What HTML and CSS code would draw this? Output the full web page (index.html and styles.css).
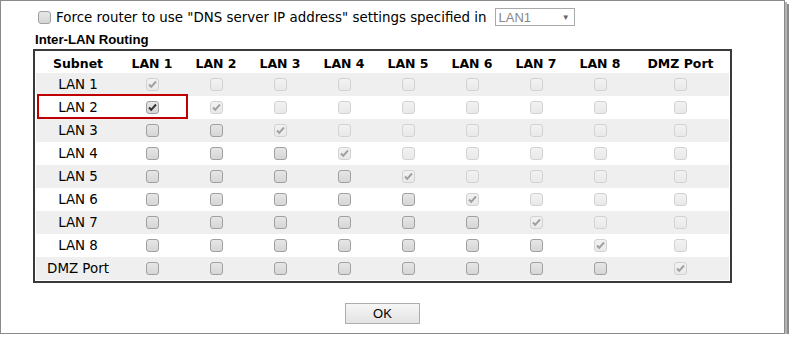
FILE: index.html
```html
<!DOCTYPE html>
<html lang="en">
<head>
  <meta charset="UTF-8">
  <title>Inter-LAN Routing</title>
  <link rel="stylesheet" href="styles.css">
</head>
<body>
  <div class="frame">
    <div class="dns-row">
      <input type="checkbox" class="cb" id="forceDns">
      <label for="forceDns">Force router to use "DNS server IP address" settings specified in</label>
      <div class="select"><span>LAN1</span><span class="arrow">&#9660;</span></div>
    </div>
    <div class="section-title">Inter-LAN Routing</div>
    <div class="table-wrap">
      <table class="routing">
        <tr class="head">
          <th class="subnet">Subnet</th><th>LAN 1</th><th>LAN 2</th><th>LAN 3</th><th>LAN 4</th><th>LAN 5</th><th>LAN 6</th><th>LAN 7</th><th>LAN 8</th><th class="dmz">DMZ Port</th>
        </tr>
        <tr class="odd">
          <td>LAN 1</td>
          <td><input type="checkbox" class="cb" checked disabled></td>
          <td><input type="checkbox" class="cb" disabled></td><td><input type="checkbox" class="cb" disabled></td><td><input type="checkbox" class="cb" disabled></td><td><input type="checkbox" class="cb" disabled></td><td><input type="checkbox" class="cb" disabled></td><td><input type="checkbox" class="cb" disabled></td><td><input type="checkbox" class="cb" disabled></td><td><input type="checkbox" class="cb" disabled></td>
        </tr>
        <tr>
          <td>LAN 2</td>
          <td><input type="checkbox" class="cb" checked></td>
          <td><input type="checkbox" class="cb" checked disabled></td>
          <td><input type="checkbox" class="cb" disabled></td><td><input type="checkbox" class="cb" disabled></td><td><input type="checkbox" class="cb" disabled></td><td><input type="checkbox" class="cb" disabled></td><td><input type="checkbox" class="cb" disabled></td><td><input type="checkbox" class="cb" disabled></td><td><input type="checkbox" class="cb" disabled></td>
        </tr>
        <tr class="odd">
          <td>LAN 3</td>
          <td><input type="checkbox" class="cb"></td><td><input type="checkbox" class="cb"></td>
          <td><input type="checkbox" class="cb" checked disabled></td>
          <td><input type="checkbox" class="cb" disabled></td><td><input type="checkbox" class="cb" disabled></td><td><input type="checkbox" class="cb" disabled></td><td><input type="checkbox" class="cb" disabled></td><td><input type="checkbox" class="cb" disabled></td><td><input type="checkbox" class="cb" disabled></td>
        </tr>
        <tr>
          <td>LAN 4</td>
          <td><input type="checkbox" class="cb"></td><td><input type="checkbox" class="cb"></td><td><input type="checkbox" class="cb"></td>
          <td><input type="checkbox" class="cb" checked disabled></td>
          <td><input type="checkbox" class="cb" disabled></td><td><input type="checkbox" class="cb" disabled></td><td><input type="checkbox" class="cb" disabled></td><td><input type="checkbox" class="cb" disabled></td><td><input type="checkbox" class="cb" disabled></td>
        </tr>
        <tr class="odd">
          <td>LAN 5</td>
          <td><input type="checkbox" class="cb"></td><td><input type="checkbox" class="cb"></td><td><input type="checkbox" class="cb"></td><td><input type="checkbox" class="cb"></td>
          <td><input type="checkbox" class="cb" checked disabled></td>
          <td><input type="checkbox" class="cb" disabled></td><td><input type="checkbox" class="cb" disabled></td><td><input type="checkbox" class="cb" disabled></td><td><input type="checkbox" class="cb" disabled></td>
        </tr>
        <tr>
          <td>LAN 6</td>
          <td><input type="checkbox" class="cb"></td><td><input type="checkbox" class="cb"></td><td><input type="checkbox" class="cb"></td><td><input type="checkbox" class="cb"></td><td><input type="checkbox" class="cb"></td>
          <td><input type="checkbox" class="cb" checked disabled></td>
          <td><input type="checkbox" class="cb" disabled></td><td><input type="checkbox" class="cb" disabled></td><td><input type="checkbox" class="cb" disabled></td>
        </tr>
        <tr class="odd">
          <td>LAN 7</td>
          <td><input type="checkbox" class="cb"></td><td><input type="checkbox" class="cb"></td><td><input type="checkbox" class="cb"></td><td><input type="checkbox" class="cb"></td><td><input type="checkbox" class="cb"></td><td><input type="checkbox" class="cb"></td>
          <td><input type="checkbox" class="cb" checked disabled></td>
          <td><input type="checkbox" class="cb" disabled></td><td><input type="checkbox" class="cb" disabled></td>
        </tr>
        <tr>
          <td>LAN 8</td>
          <td><input type="checkbox" class="cb"></td><td><input type="checkbox" class="cb"></td><td><input type="checkbox" class="cb"></td><td><input type="checkbox" class="cb"></td><td><input type="checkbox" class="cb"></td><td><input type="checkbox" class="cb"></td><td><input type="checkbox" class="cb"></td>
          <td><input type="checkbox" class="cb" checked disabled></td>
          <td><input type="checkbox" class="cb" disabled></td>
        </tr>
        <tr class="odd">
          <td>DMZ Port</td>
          <td><input type="checkbox" class="cb"></td><td><input type="checkbox" class="cb"></td><td><input type="checkbox" class="cb"></td><td><input type="checkbox" class="cb"></td><td><input type="checkbox" class="cb"></td><td><input type="checkbox" class="cb"></td><td><input type="checkbox" class="cb"></td><td><input type="checkbox" class="cb"></td>
          <td><input type="checkbox" class="cb" checked disabled></td>
        </tr>
      </table>
      <div class="highlight"></div>
    </div>
    <div class="actions">
      <button class="btn-ok">OK</button>
    </div>
  </div>
</body>
</html>
```

FILE: styles.css
```css
* { margin: 0; padding: 0; box-sizing: border-box; }
body {
  background: #fff;
  font-family: "DejaVu Sans", Verdana, sans-serif;
  font-size: 13.4px;
  color: #000;
}
.frame {
  width: 785px;
  height: 334px;
  border: 1px solid #8a8a8a;
  box-shadow: 2px 2px 0 #b4b4b4, 4px 4px 0 #8c8c8c;
  padding: 0 0 0 32px;
}
.dns-row {
  display: flex;
  align-items: center;
  height: 18px;
  margin-top: 7px;
  padding-left: 5px;
}
.dns-row .cb {
  margin: 0;
  flex-shrink: 0;
}
.dns-row label {
  margin-left: 5px;
  font-size: 13.4px;
  white-space: nowrap;
}
.select {
  display: flex;
  align-items: center;
  justify-content: space-between;
  flex-shrink: 0;
  width: 80px;
  height: 18px;
  margin-left: 8px;
  border: 1px solid #a9a9a9;
  padding: 0 4px 0 3px;
  color: #888;
  font-family: "Liberation Sans", Arial, sans-serif;
  font-size: 13px;
}
.select .arrow {
  font-size: 8px;
  color: #666;
}
.section-title {
  font-family: "Liberation Sans", Arial, sans-serif;
  font-weight: bold;
  font-size: 13.2px;
  margin-top: 6px;
  margin-left: 2px;
  height: 17px;
}
.table-wrap {
  position: relative;
  width: 699px;
}
.routing {
  width: 699px;
  border: 2px solid #3a3a3a;
  border-collapse: separate;
  border-spacing: 0;
  padding: 1px;
  table-layout: fixed;
}
.routing th {
  height: 21px;
  width: 64px;
  padding-top: 1px;
  font-weight: bold;
  font-size: 12.5px;
  text-align: center;
  background: #fff;
}
.routing th.subnet { width: 84px; }
.routing th.dmz { width: 97px; }
.routing td {
  height: 23px;
  text-align: center;
  vertical-align: middle;
  font-size: 13.4px;
  line-height: 1;
}
.routing tr.odd td { background: #efefef; }
.cb {
  appearance: none;
  -webkit-appearance: none;
  display: block;
  margin: 0 auto;
  width: 13px;
  height: 13px;
  border: 1px solid #a0a0a0;
  border-radius: 3px;
  background: linear-gradient(#e6e6e6, #d6d6d6);
  background-repeat: no-repeat;
  background-position: center;
}
.cb:disabled {
  border-color: #d2d2d2;
  background: linear-gradient(#f2f2f2, #e9e9e9);
}
.cb:checked {
  background-image: url("data:image/svg+xml;utf8,<svg xmlns='http://www.w3.org/2000/svg' width='11' height='11' viewBox='0 0 11 11'><path d='M2 5.5 L4.2 7.8 L9 2.5' fill='none' stroke='%23333' stroke-width='2'/></svg>"), linear-gradient(#e6e6e6, #d6d6d6);
  background-repeat: no-repeat;
  background-position: center;
}
.cb:checked:disabled {
  background-image: url("data:image/svg+xml;utf8,<svg xmlns='http://www.w3.org/2000/svg' width='11' height='11' viewBox='0 0 11 11'><path d='M2 5.5 L4.2 7.8 L9 2.5' fill='none' stroke='%23a0a0a0' stroke-width='2'/></svg>"), linear-gradient(#f2f2f2, #e9e9e9);
}
.highlight {
  position: absolute;
  left: 4px;
  top: 45px;
  width: 151px;
  height: 25px;
  border: 2px solid #c00000;
  pointer-events: none;
}
.actions {
  width: 699px;
  text-align: center;
  margin-top: 20px;
}
.btn-ok {
  width: 75px;
  height: 21px;
  border: 1px solid #adadad;
  background: linear-gradient(#f6f6f6, #e3e3e3);
  font-family: "Liberation Sans", Arial, sans-serif;
  font-size: 13px;
  color: #000;
}
```
